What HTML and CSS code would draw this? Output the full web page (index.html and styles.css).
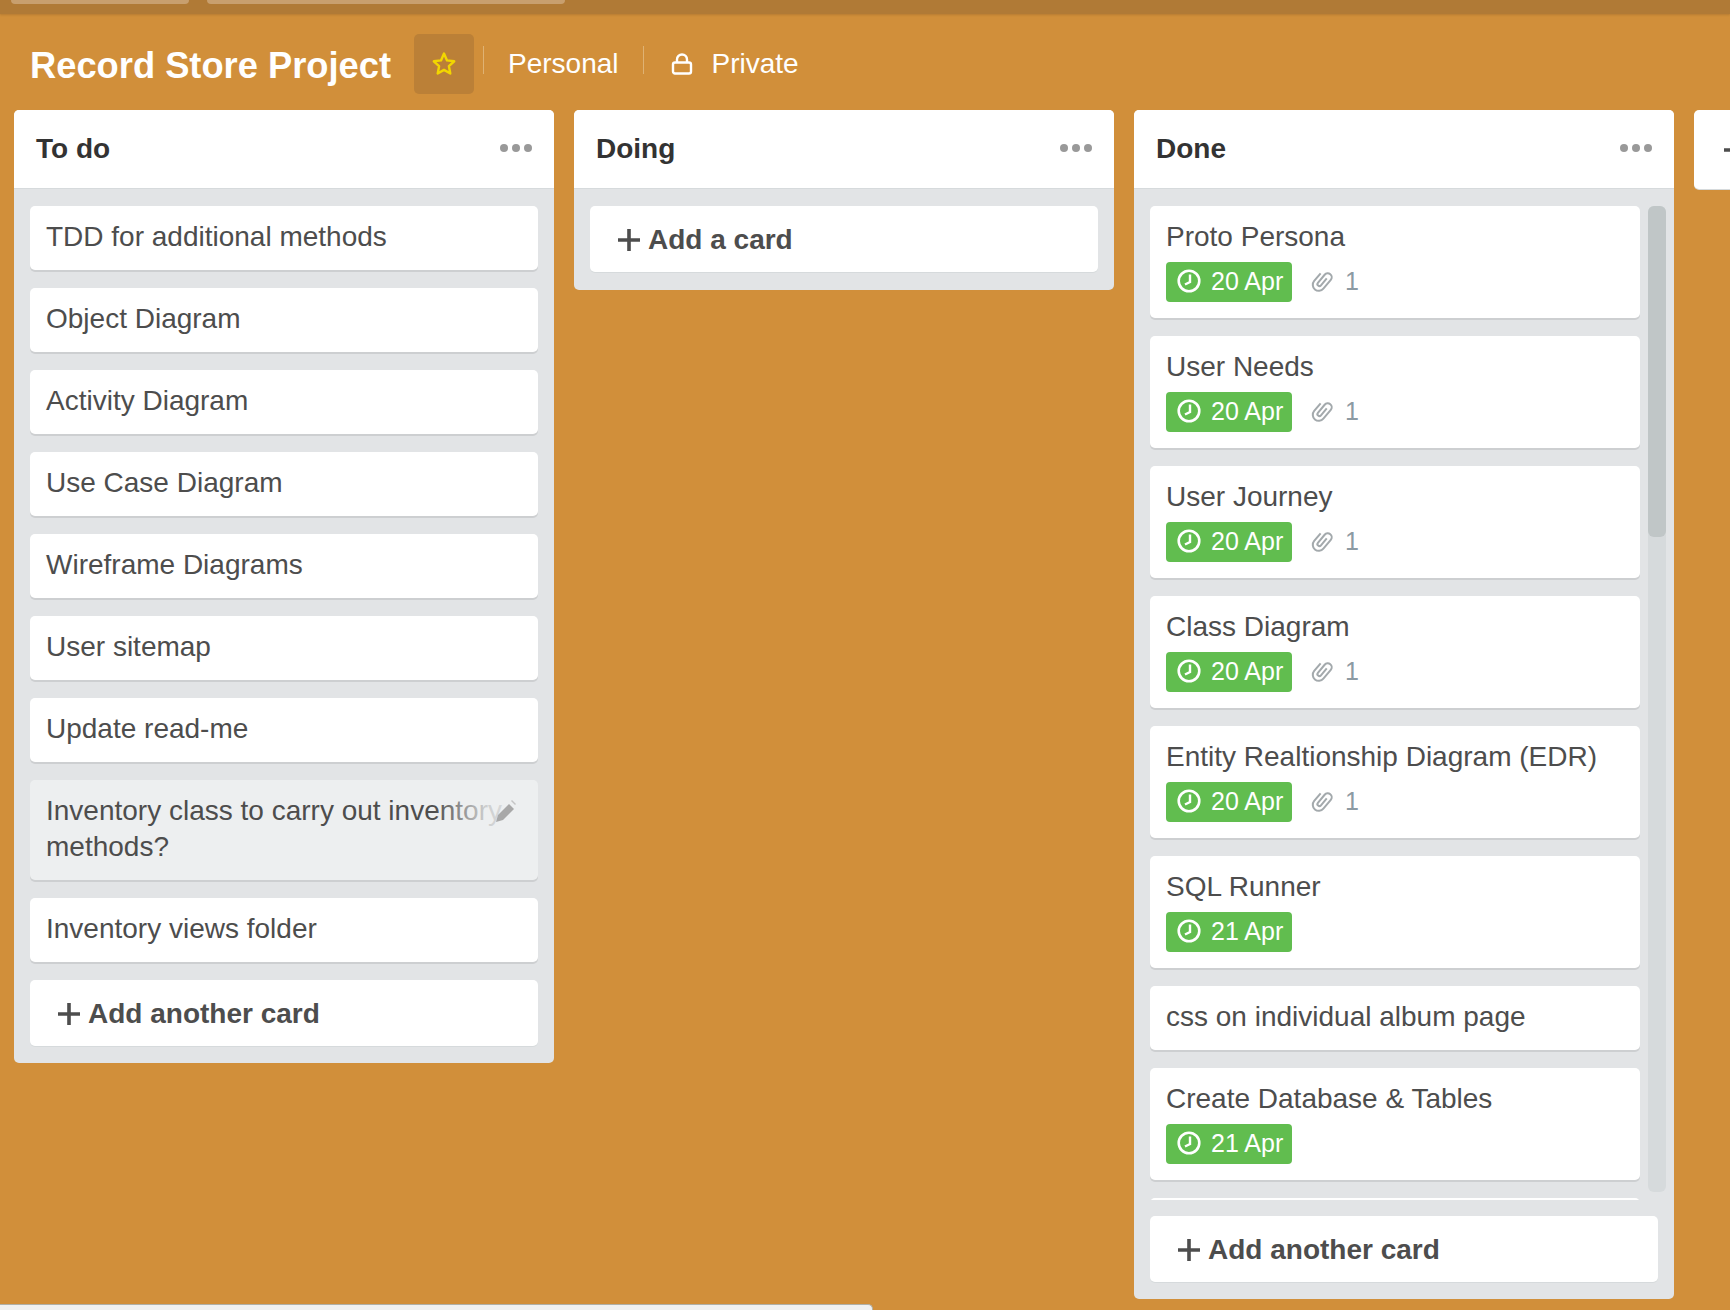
FILE: index.html
```html
<!DOCTYPE html>
<html lang="en">
<head>
    <meta charset="UTF-8">
    <meta name="viewport" content="width=device-width, initial-scale=1.0">
    <title>Record Store Project</title>
    <link rel="stylesheet" href="styles.css">
</head>
<body>
    <div class="top-bar">
        <div class="top-pill top-pill-short"></div>
        <div class="top-pill top-pill-long"></div>
    </div>

    <div class="board-header">
        <h1 class="board-title">Record Store Project</h1>
        <div class="star-btn">
            <svg width="26" height="26" viewBox="0 0 26 26"><path d="M13 2.500l3 6.900 7.200.9-5.300 4.900 1.400 7.300-6.300-3.600-6.300 3.600 1.400-7.300-5.300-4.900 7.200-.9z" fill="none" stroke="#f2d600" stroke-width="2.400" stroke-linejoin="round"/></svg>
        </div>
        <span class="header-divider"></span>
        <span class="header-link team-link">Personal</span>
        <span class="header-divider divider-second"></span>
        <svg class="lock-icon" width="22" height="22" viewBox="0 0 22 22"><rect x="2" y="9.500" width="18" height="11" rx="2" fill="none" stroke="#fff" stroke-width="2.400"/><path d="M6 9.500V6.500a5 5 0 0 1 10 0v3" fill="none" stroke="#fff" stroke-width="2.400"/></svg>
        <span class="header-link">Private</span>
    </div>

    <div class="board">
        <div class="list">
            <div class="list-header">
                <h2>To do</h2>
                <div class="dots"><i></i><i></i><i></i></div>
            </div>
            <div class="list-body">
                <div class="card">TDD for additional methods</div>
                <div class="card">Object Diagram</div>
                <div class="card">Activity Diagram</div>
                <div class="card">Use Case Diagram</div>
                <div class="card">Wireframe Diagrams</div>
                <div class="card">User sitemap</div>
                <div class="card">Update read-me</div>
                <div class="card card-hover">
                    Inventory class to carry out inventory methods?
                    <span class="card-fade"></span>
                    <svg class="pencil" width="24" height="24" viewBox="0 0 24 24"><path d="M3 23l2-7L16 5l5 5L10 21z" fill="#a8a8a8"/><path d="M19 1l4 4-1 1-4-4z" fill="#c4c4c4"/></svg>
                </div>
                <div class="card">Inventory views folder</div>
                <div class="add-card">
                    <svg width="22" height="22" viewBox="0 0 22 22"><path d="M11 0v22M0 11h22" stroke="#4d4d4d" stroke-width="3.600"/></svg>
                    Add another card
                </div>
            </div>
        </div>

        <div class="list">
            <div class="list-header">
                <h2>Doing</h2>
                <div class="dots"><i></i><i></i><i></i></div>
            </div>
            <div class="list-body">
                <div class="add-card add-card-first">
                    <svg width="22" height="22" viewBox="0 0 22 22"><path d="M11 0v22M0 11h22" stroke="#4d4d4d" stroke-width="3.600"/></svg>
                    Add a card
                </div>
            </div>
        </div>

        <div class="list">
            <div class="list-header">
                <h2>Done</h2>
                <div class="dots"><i></i><i></i><i></i></div>
            </div>
            <div class="list-body list-body-scroll">
                <div class="scroll-area">
                    <div class="scroll-cards">
                        <div class="card">Proto Persona
                            <div class="badges">
                                <span class="due"><svg width="24" height="24" viewBox="0 0 24 24"><circle cx="12" cy="12" r="10.300" fill="none" stroke="#fff" stroke-width="2.600"/><path d="M13 5.500V13L8 15.500" fill="none" stroke="#fff" stroke-width="2.400"/></svg>20 Apr</span>
                                <svg class="clip" width="24" height="24" viewBox="0 0 24 24"><path d="M6 7v10a6 6 0 0 0 12 0V5.500a4 4 0 0 0-8 0V16a2 2 0 0 0 4 0V7" fill="none" stroke="#a3a9ac" stroke-width="2" transform="rotate(40 12 12)"/></svg>
                                <span class="clip-count">1</span>
                            </div>
                        </div>
                        <div class="card">User Needs
                            <div class="badges">
                                <span class="due"><svg width="24" height="24" viewBox="0 0 24 24"><circle cx="12" cy="12" r="10.300" fill="none" stroke="#fff" stroke-width="2.600"/><path d="M13 5.500V13L8 15.500" fill="none" stroke="#fff" stroke-width="2.400"/></svg>20 Apr</span>
                                <svg class="clip" width="24" height="24" viewBox="0 0 24 24"><path d="M6 7v10a6 6 0 0 0 12 0V5.500a4 4 0 0 0-8 0V16a2 2 0 0 0 4 0V7" fill="none" stroke="#a3a9ac" stroke-width="2" transform="rotate(40 12 12)"/></svg>
                                <span class="clip-count">1</span>
                            </div>
                        </div>
                        <div class="card">User Journey
                            <div class="badges">
                                <span class="due"><svg width="24" height="24" viewBox="0 0 24 24"><circle cx="12" cy="12" r="10.300" fill="none" stroke="#fff" stroke-width="2.600"/><path d="M13 5.500V13L8 15.500" fill="none" stroke="#fff" stroke-width="2.400"/></svg>20 Apr</span>
                                <svg class="clip" width="24" height="24" viewBox="0 0 24 24"><path d="M6 7v10a6 6 0 0 0 12 0V5.500a4 4 0 0 0-8 0V16a2 2 0 0 0 4 0V7" fill="none" stroke="#a3a9ac" stroke-width="2" transform="rotate(40 12 12)"/></svg>
                                <span class="clip-count">1</span>
                            </div>
                        </div>
                        <div class="card">Class Diagram
                            <div class="badges">
                                <span class="due"><svg width="24" height="24" viewBox="0 0 24 24"><circle cx="12" cy="12" r="10.300" fill="none" stroke="#fff" stroke-width="2.600"/><path d="M13 5.500V13L8 15.500" fill="none" stroke="#fff" stroke-width="2.400"/></svg>20 Apr</span>
                                <svg class="clip" width="24" height="24" viewBox="0 0 24 24"><path d="M6 7v10a6 6 0 0 0 12 0V5.500a4 4 0 0 0-8 0V16a2 2 0 0 0 4 0V7" fill="none" stroke="#a3a9ac" stroke-width="2" transform="rotate(40 12 12)"/></svg>
                                <span class="clip-count">1</span>
                            </div>
                        </div>
                        <div class="card">Entity Realtionship Diagram (EDR)
                            <div class="badges">
                                <span class="due"><svg width="24" height="24" viewBox="0 0 24 24"><circle cx="12" cy="12" r="10.300" fill="none" stroke="#fff" stroke-width="2.600"/><path d="M13 5.500V13L8 15.500" fill="none" stroke="#fff" stroke-width="2.400"/></svg>20 Apr</span>
                                <svg class="clip" width="24" height="24" viewBox="0 0 24 24"><path d="M6 7v10a6 6 0 0 0 12 0V5.500a4 4 0 0 0-8 0V16a2 2 0 0 0 4 0V7" fill="none" stroke="#a3a9ac" stroke-width="2" transform="rotate(40 12 12)"/></svg>
                                <span class="clip-count">1</span>
                            </div>
                        </div>
                        <div class="card">SQL Runner
                            <div class="badges">
                                <span class="due"><svg width="24" height="24" viewBox="0 0 24 24"><circle cx="12" cy="12" r="10.300" fill="none" stroke="#fff" stroke-width="2.600"/><path d="M13 5.500V13L8 15.500" fill="none" stroke="#fff" stroke-width="2.400"/></svg>21 Apr</span>
                            </div>
                        </div>
                        <div class="card">css on individual album page</div>
                        <div class="card">Create Database &amp; Tables
                            <div class="badges">
                                <span class="due"><svg width="24" height="24" viewBox="0 0 24 24"><circle cx="12" cy="12" r="10.300" fill="none" stroke="#fff" stroke-width="2.600"/><path d="M13 5.500V13L8 15.500" fill="none" stroke="#fff" stroke-width="2.400"/></svg>21 Apr</span>
                            </div>
                        </div>
                        <div class="card card-cut"></div>
                    </div>
                    <div class="scroll-track"><div class="scroll-thumb"></div></div>
                </div>
                <div class="add-card add-card-scroll">
                    <svg width="22" height="22" viewBox="0 0 22 22"><path d="M11 0v22M0 11h22" stroke="#4d4d4d" stroke-width="3.600"/></svg>
                    Add another card
                </div>
            </div>
        </div>

        <div class="add-list">
            <svg width="22" height="22" viewBox="0 0 22 22"><path d="M11 0v22M0 11h22" stroke="#4d4d4d" stroke-width="3.600"/></svg>
        </div>
    </div>

    <div class="board-scrollbar"></div>
</body>
</html>
```

FILE: styles.css
```css
html, body {
    height: 100%;
}

body {
    margin: 0;
    overflow: hidden;
    background-color: #d18f3a;
    font-family: "Liberation Sans", Arial, sans-serif;
    font-size: 28px;
    line-height: 36px;
    color: #4d4d4d;
}

.top-bar {
    display: flex;
    gap: 18px;
    height: 14px;
    padding-left: 11px;
    background-color: #b07a36;
    box-shadow: 0 1px 2px rgba(120, 80, 30, 0.3);
}

.top-pill {
    height: 4px;
    background-color: #c89f6e;
    border-radius: 0 0 4px 4px;
}

.top-pill-short {
    width: 178px;
}

.top-pill-long {
    width: 358px;
}

.board-header {
    display: flex;
    align-items: center;
    height: 60px;
    padding: 20px 0 16px 30px;
    color: #fff;
}

.board-title {
    margin: 0;
    width: 384px;
    padding-top: 3px;
    font-size: 36.300px;
    line-height: 44px;
    font-weight: bold;
    white-space: nowrap;
}

.star-btn {
    display: flex;
    align-items: center;
    justify-content: center;
    width: 60px;
    height: 60px;
    background-color: #bb8037;
    border-radius: 5px;
}

.header-divider {
    width: 1px;
    height: 28px;
    margin: 0 0 8px 9px;
    background-color: #dfb273;
}

.divider-second {
    margin-left: 24px;
}

.header-link {
    font-size: 28px;
    white-space: nowrap;
}

.team-link {
    margin-left: 24px;
}

.lock-icon {
    margin: 0 19px 0 27px;
}

.board {
    display: flex;
    align-items: flex-start;
    gap: 20px;
    padding-left: 14px;
}

.list {
    flex: 0 0 540px;
    background-color: #e2e4e6;
    border-radius: 5px;
}

.list-header {
    display: flex;
    align-items: center;
    justify-content: space-between;
    height: 78px;
    padding: 0 22px;
    background-color: #fff;
    border-bottom: 1px solid #d6dadc;
    border-radius: 5px 5px 0 0;
}

.list-header h2 {
    margin: 0 0 1px;
    font-size: 28px;
    font-weight: bold;
    color: #333;
}

.dots {
    display: flex;
    gap: 4px;
    margin-bottom: 2px;
}

.dots i {
    width: 8px;
    height: 8px;
    background-color: #999;
    border-radius: 50%;
}

.list-body {
    padding: 17px 16px;
}

.list-body-scroll {
    padding-right: 8px;
}

.card {
    position: relative;
    margin-bottom: 18px;
    padding: 13px 14px 15px 16px;
    background-color: #fff;
    border-radius: 5px;
    box-shadow: 0 2px 0 #cdcfd1;
}

.card-hover {
    background-color: #edeff0;
}

.card-fade {
    position: absolute;
    top: 13px;
    right: 0;
    width: 104px;
    height: 36px;
    background: linear-gradient(to right, rgba(237, 239, 240, 0), rgba(237, 239, 240, 0.8) 50%, #edeff0);
}

.pencil {
    position: absolute;
    top: 19px;
    right: 21px;
}

.badges {
    display: flex;
    align-items: center;
    height: 40px;
    margin-top: 7px;
    margin-bottom: 1px;
}

.due {
    display: flex;
    align-items: center;
    gap: 10px;
    width: 126px;
    height: 40px;
    box-sizing: border-box;
    padding: 0 0 2px 11px;
    background-color: #61bd4f;
    border-radius: 4px;
    color: #fff;
    font-size: 25px;
}

.clip {
    margin: 0 0 2px 18px;
}

.clip-count {
    margin: 0 0 2px 11px;
    font-size: 25px;
    color: #8c9aa3;
}

.add-card {
    display: flex;
    align-items: center;
    gap: 8px;
    height: 64px;
    padding: 2px 0 0 28px;
    background-color: #fff;
    border-radius: 5px;
    box-shadow: 0 1px 0 #d6dadc;
    font-weight: bold;
}

.add-card-first {
    margin-bottom: 1px;
}

.add-card-scroll {
    margin-right: 8px;
}

.scroll-area {
    display: flex;
    gap: 8px;
    height: 994px;
    overflow: hidden;
    margin-bottom: 16px;
}

.scroll-cards {
    width: 490px;
}

.card-cut {
    height: 36px;
}

.scroll-track {
    width: 18px;
    height: 986px;
    background-color: #d6dadc;
    border-radius: 6px;
}

.scroll-thumb {
    height: 331px;
    background-color: #c0c6c7;
    border-radius: 6px;
}

.add-list {
    flex: 0 0 540px;
    display: flex;
    align-items: center;
    height: 79px;
    padding-left: 30px;
    background-color: #fff;
    border-radius: 5px;
    box-shadow: 0 1px 0 #d6dadc;
}

.board-scrollbar {
    position: absolute;
    left: 0;
    bottom: 0;
    width: 872px;
    height: 5px;
    background-color: #f0f1f1;
    border-top: 1px solid #b0b0a8;
    border-right: 1px solid #b0b0a8;
    border-radius: 0 5px 0 0;
}
```
